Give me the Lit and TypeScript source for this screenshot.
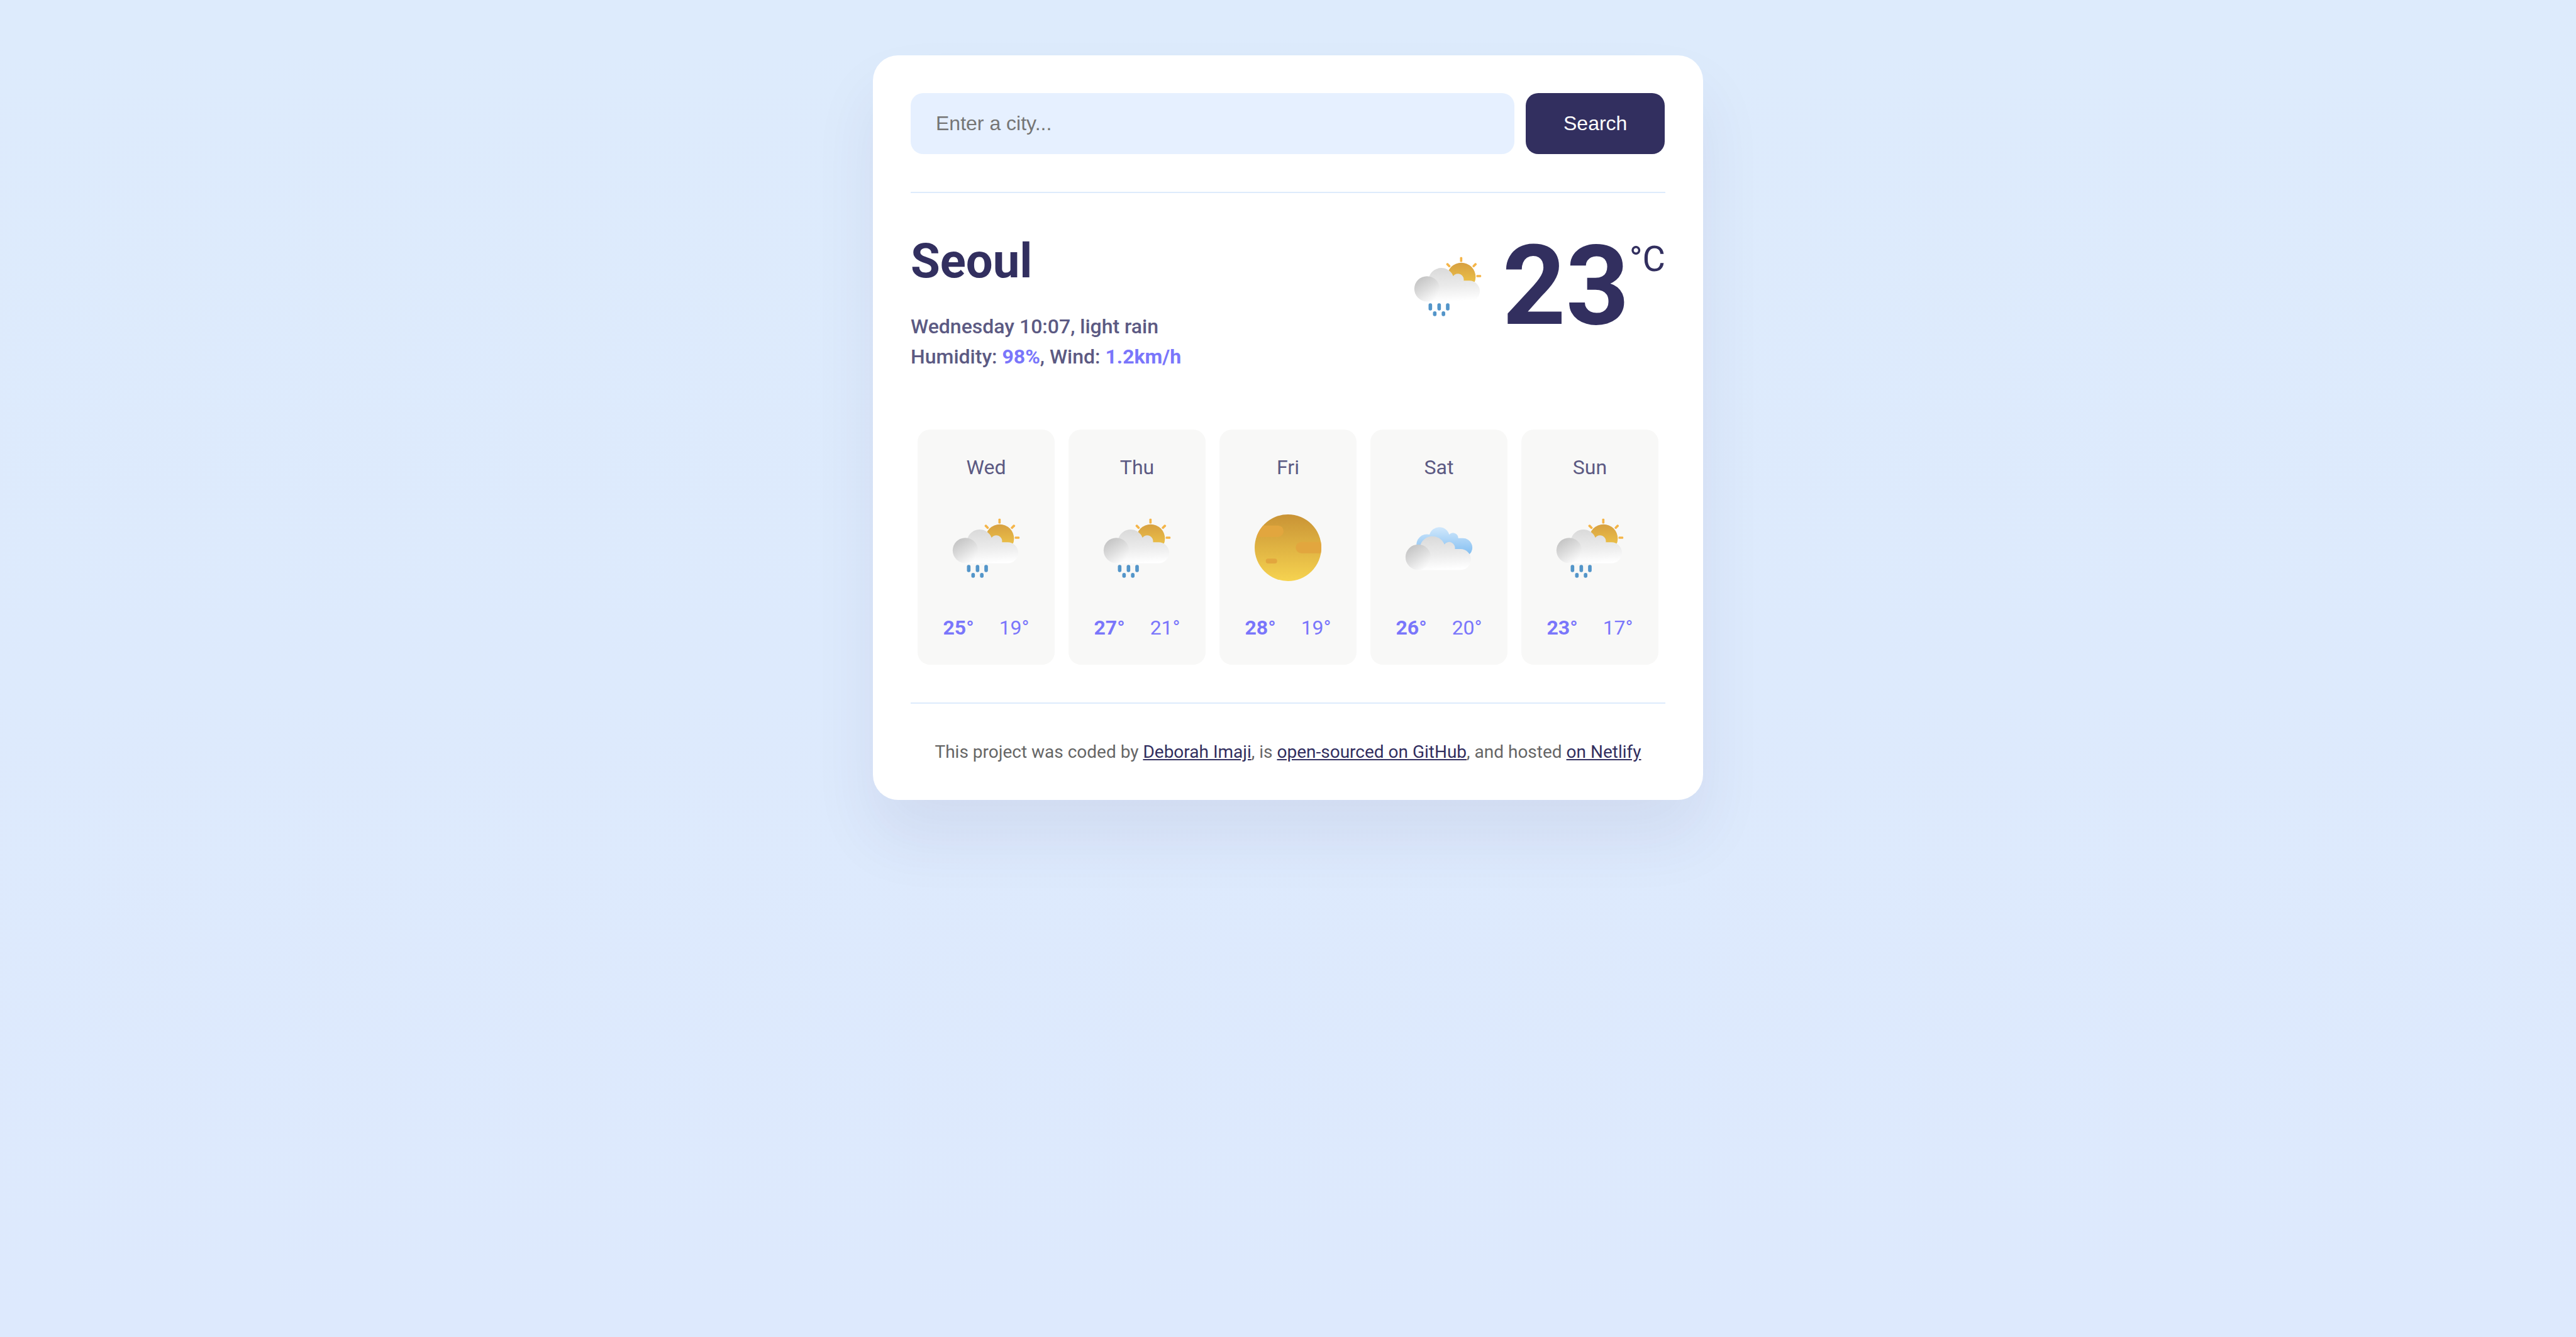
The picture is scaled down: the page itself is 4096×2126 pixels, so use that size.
import { LitElement, html, svg, css } from "lit";
import { customElement, property, state } from "lit/decorators.js";

type IconName = "rain" | "clear" | "clouds";

interface Day {
  name: string;
  icon: IconName;
  max: number;
  min: number;
}

// Front cloud shared by the rain and the cloudy icons.
const cloud = (dy: number) => svg`
  <g transform="translate(0 ${dy})">
    <path fill="url(#cloud)" d="M60 233 C58 170 66 130 71 112 A61 61 0 0 1 185 111 A28 28 0 0 1 235 133 L262 133 A50 50 0 0 1 262 233 Z"/>
    <circle cx="60" cy="172" r="60.5" fill="url(#puff)"/>
  </g>`;

const rays = [
  [223, 32, 0],
  [287, 59, 45],
  [307, 111, 90],
  [162, 59, -45],
];

const drops = [
  [76, 241, 34],
  [118, 241, 34],
  [159, 241, 34],
  [97, 279, 23],
  [138.5, 279, 23],
];

const drawings = {
  rain: svg`
    ${rays.map(
      ([x, y, r]) => svg`<rect x="-5.5" y="-11.5" width="11" height="23" rx="4" fill="#f5b548" transform="translate(${x} ${y}) rotate(${r})"/>`
    )}
    <clipPath id="half"><path d="M150 30H300V139H150Z"/></clipPath>
    <circle cx="224" cy="115" r="68" fill="url(#sun)" clip-path="url(#half)"/>
    ${cloud(0)}
    ${drops.map(
      ([x, y, h]) => svg`<rect x="${x - 8.5}" y="${y}" width="17" height="${h}" rx="8" fill="#5395c9"/>`
    )}`,
  clear: svg`
    <clipPath id="disc"><circle cx="159" cy="159" r="159"/></clipPath>
    <g clip-path="url(#disc)">
      <rect width="318" height="318" fill="url(#disk)"/>
      <g fill="#e2a63e">
        <rect x="-40" y="53" width="178" height="54" rx="27"/>
        <rect x="196" y="131" width="170" height="54" rx="27"/>
        <rect x="53" y="211" width="54" height="23" rx="11"/>
      </g>
    </g>`,
  clouds: svg`
    <path fill="url(#sky)" d="M53 155 A50 50 0 0 1 114 96 A49 49 0 0 1 208 96 A25 25 0 0 1 251 113 L273 113 A45 45 0 0 1 305 190 L280 200 L80 200 Z"/>
    ${cloud(32)}`,
};

@customElement("weather-icon")
export class WeatherIcon extends LitElement {
  @property() name: IconName = "clear";

  static styles = css`
    :host {
      display: block;
      width: 106px;
      height: 106px;
    }
    .icon {
      display: block;
      width: 100%;
      height: 100%;
      overflow: visible;
    }
  `;

  render() {
    return html`<svg class="icon" viewBox="0 0 318 318" aria-hidden="true">
      <defs>
        <linearGradient id="sun" x1="0" y1="47" x2="0" y2="183" gradientUnits="userSpaceOnUse">
          <stop offset="0" stop-color="#d7a040" />
          <stop offset="1" stop-color="#f3cd4d" />
        </linearGradient>
        <linearGradient id="disk" x1="0" y1="0" x2="0" y2="1">
          <stop offset="0" stop-color="#c99335" />
          <stop offset="1" stop-color="#f6d350" />
        </linearGradient>
        <linearGradient id="cloud" x1="120" y1="69" x2="128" y2="233" gradientUnits="userSpaceOnUse">
          <stop offset="0" stop-color="#d9d9d9" />
          <stop offset="0.55" stop-color="#ebebeb" />
          <stop offset="1" stop-color="#ffffff" />
        </linearGradient>
        <linearGradient id="puff" x1="0.2" y1="0.1" x2="0.75" y2="0.95">
          <stop offset="0" stop-color="#c5c5c5" />
          <stop offset="0.5" stop-color="#dedede" />
          <stop offset="1" stop-color="#fbfbfb" />
        </linearGradient>
        <linearGradient id="sky" x1="0" y1="57" x2="0" y2="190" gradientUnits="userSpaceOnUse">
          <stop offset="0" stop-color="#d3e9fc" />
          <stop offset="1" stop-color="#84bff1" />
        </linearGradient>
      </defs>
      ${drawings[this.name]}
    </svg>`;
  }
}

@customElement("app-root")
export class AppRoot extends LitElement {
  @state() private days: Day[] = [
    { name: "Wed", icon: "rain", max: 25, min: 19 },
    { name: "Thu", icon: "rain", max: 27, min: 21 },
    { name: "Fri", icon: "clear", max: 28, min: 19 },
    { name: "Sat", icon: "clouds", max: 26, min: 20 },
    { name: "Sun", icon: "rain", max: 23, min: 17 },
  ];

  static styles = css`
    :host {
      display: block;
      box-sizing: border-box;
      min-height: 100vh;
      padding-top: 88px;
      background: linear-gradient(#ddebfc, #dde9fd);
      font-family: Roboto, "Liberation Sans", sans-serif;
      font-size: 32px;
      color: #322f5f;
    }
    .card {
      box-sizing: border-box;
      width: 1320px;
      margin: 0 auto;
      padding: 60px;
      border-radius: 40px;
      background: #fff;
      box-shadow: 0 60px 100px rgba(65, 50, 100, 0.08);
    }
    .search {
      display: flex;
      gap: 18px;
      padding-bottom: 60px;
      border-bottom: 2px solid #ddebfc;
    }
    .field,
    .submit {
      box-sizing: border-box;
      height: 97px;
      margin: 0;
      border: 0;
      border-radius: 20px;
      font: 32px "Liberation Sans", Arial, sans-serif;
    }
    .field {
      width: 960px;
      padding: 0 40px;
      background: #e6f0ff;
      color: #322f5f;
    }
    .field::placeholder {
      color: #757575;
    }
    .submit {
      padding: 0 60px;
      background: #322f5f;
      color: #fff;
    }
    .current {
      display: flex;
      justify-content: space-between;
      align-items: flex-start;
      padding-top: 60px;
    }
    .city {
      margin: 0 0 35px;
      padding-top: 3px;
      font-size: 76px;
      font-weight: 700;
      line-height: 90px;
    }
    .details {
      margin: 0;
      font-weight: 500;
      line-height: 48px;
      color: #5c5a83;
    }
    .accent {
      font-weight: 700;
      color: #7a76fb;
    }
    .reading {
      display: flex;
      align-items: flex-start;
    }
    .now {
      margin: 35px 34px 0 0;
    }
    .degrees {
      padding-top: 2px;
      font-size: 176px;
      font-weight: 700;
      line-height: 172px;
    }
    .unit {
      padding-top: 12px;
      font-size: 56px;
      line-height: 66px;
    }
    .forecast {
      display: grid;
      grid-template-columns: repeat(5, 218px);
      justify-content: space-around;
      margin: 92px 0 60px;
    }
    .day {
      display: flex;
      flex-direction: column;
      align-items: center;
      padding: 40px 0 39px;
      border-radius: 20px;
      background: #f8f8f7;
      line-height: 40px;
    }
    .name {
      color: #5c5a83;
    }
    .picture {
      margin: 55px 0 54px;
    }
    .range {
      display: flex;
      gap: 40px;
      color: #7a76fb;
    }
    .max {
      font-weight: 700;
    }
    .footer {
      padding-top: 60px;
      border-top: 2px solid #ddebfc;
      font-size: 28px;
      line-height: 33px;
      text-align: center;
      color: #666;
    }
    .link {
      color: #322f5f;
      text-decoration: underline;
    }
  `;

  render() {
    return html`
      <main class="card">
        <form class="search" @submit=${(e: Event) => e.preventDefault()}>
          <input class="field" type="search" placeholder="Enter a city..." />
          <button class="submit" type="submit">Search</button>
        </form>
        <section class="current">
          <div>
            <h1 class="city">Seoul</h1>
            <p class="details">
              Wednesday 10:07, light rain<br />
              Humidity: <span class="accent">98%</span>, Wind:
              <span class="accent">1.2km/h</span>
            </p>
          </div>
          <div class="reading">
            <weather-icon class="now" name="rain"></weather-icon>
            <span class="degrees">23</span>
            <span class="unit">°C</span>
          </div>
        </section>
        <section class="forecast">
          ${this.days.map(
            (d) => html`<article class="day">
              <span class="name">${d.name}</span>
              <weather-icon class="picture" name=${d.icon}></weather-icon>
              <div class="range"><span class="max">${d.max}°</span><span>${d.min}°</span></div>
            </article>`
          )}
        </section>
        <footer class="footer">
          This project was coded by <a class="link" href="#">Deborah Imaji</a>, is
          <a class="link" href="#">open-sourced on GitHub</a>, and hosted
          <a class="link" href="#">on Netlify</a>
        </footer>
      </main>
    `;
  }
}
